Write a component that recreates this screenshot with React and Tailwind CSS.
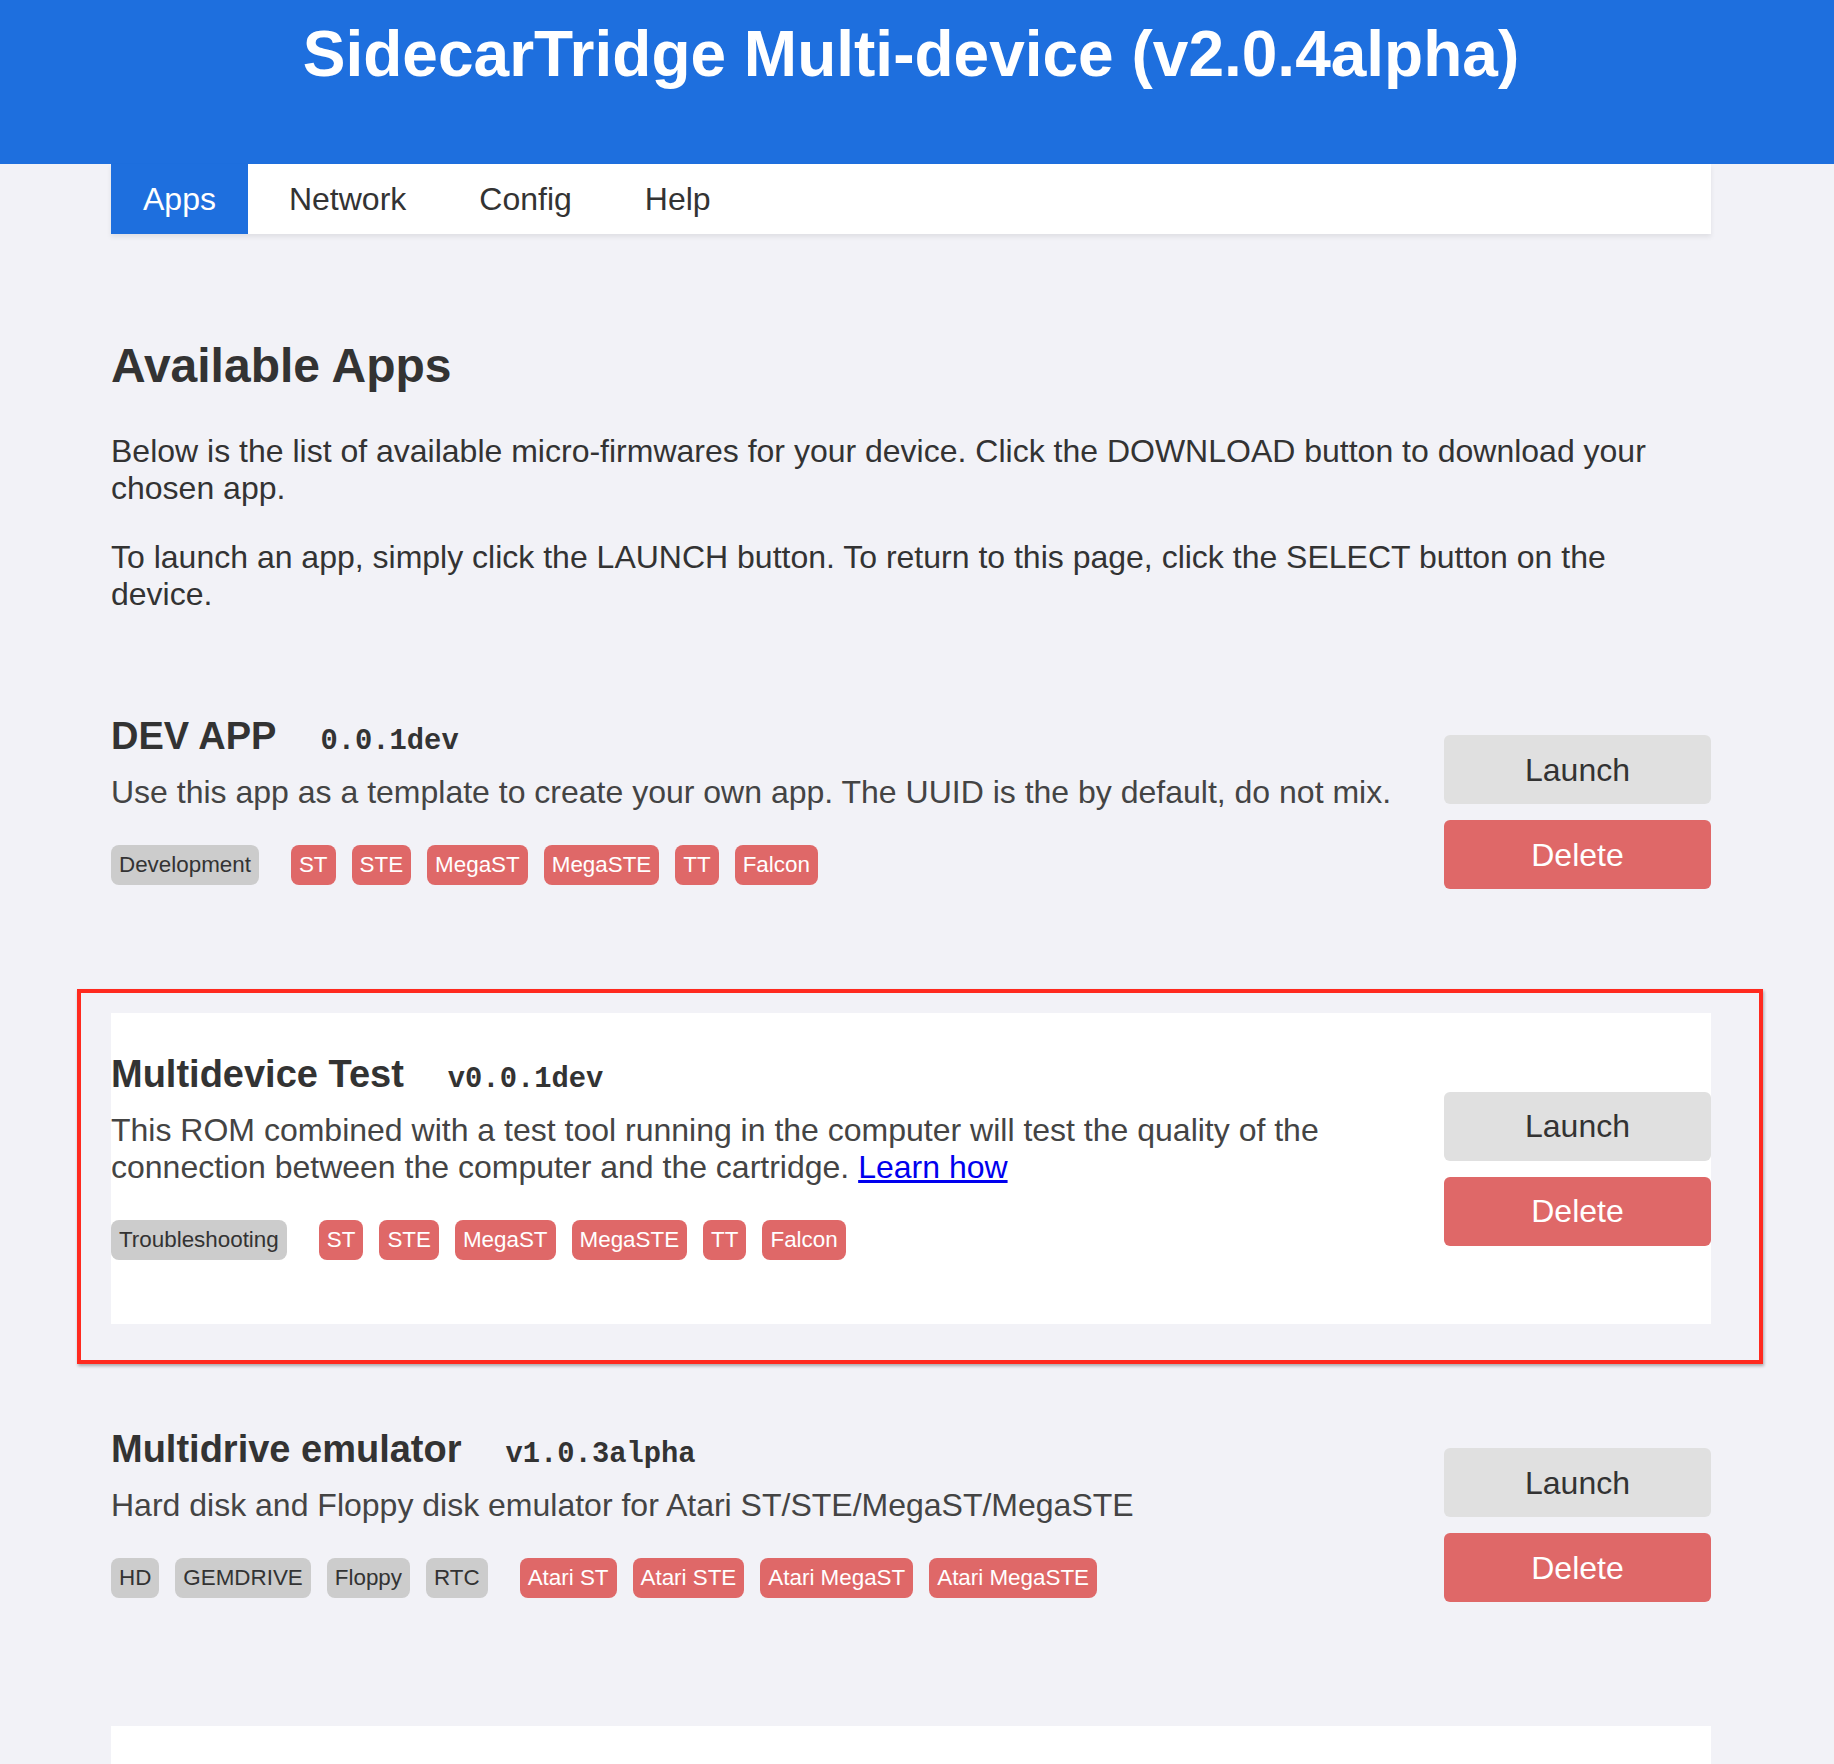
import React from "react";

const apps = [
  {
    name: "DEV APP",
    version: "0.0.1dev",
    desc: (
      <>Use this app as a template to create your own app. The UUID is the by default, do not mix.</>
    ),
    cats: ["Development"],
    devices: ["ST", "STE", "MegaST", "MegaSTE", "TT", "Falcon"],
    card: false,
    first: true,
  },
  {
    name: "Multidevice Test",
    version: "v0.0.1dev",
    desc: (
      <>
        This ROM combined with a test tool running in the computer will test the quality of the connection between the computer and the cartridge.{" "}
        <a href="#" className="text-[#0000ee] underline">Learn how</a>
      </>
    ),
    cats: ["Troubleshooting"],
    devices: ["ST", "STE", "MegaST", "MegaSTE", "TT", "Falcon"],
    card: true,
  },
  {
    name: "Multidrive emulator",
    version: "v1.0.3alpha",
    desc: <>Hard disk and Floppy disk emulator for Atari ST/STE/MegaST/MegaSTE</>,
    cats: ["HD", "GEMDRIVE", "Floppy", "RTC"],
    devices: ["Atari ST", "Atari STE", "Atari MegaST", "Atari MegaSTE"],
    card: false,
  },
];

function Tag({ children, red }) {
  return (
    <span
      className={
        red
          ? "inline-block px-[8px] py-[7px] rounded-[8px] text-[22.4px] leading-[26px] bg-[#df6868] text-white"
          : "inline-block px-[8px] py-[7px] rounded-[8px] text-[22.4px] leading-[26px] bg-[#cccccc] text-[#333]"
      }
    >
      {children}
    </span>
  );
}

function AppRow({ app }) {
  const base = app.first ? "mt-[62px] " : "mt-[64px] ";
  return (
    <div
      className={
        base +
        (app.card
          ? "bg-white py-[40px] flex items-center justify-between gap-[32px]"
          : "py-[40px] flex items-center justify-between gap-[32px]")
      }
    >
      <div className="flex-1 min-w-0">
        <h3 className="text-[38px] leading-[43px] font-bold text-[#333]">
          {app.name}
          <span className="ml-[44px] font-['Liberation_Mono','Courier_New',monospace] text-[28.8px] leading-none font-bold text-[#333]">
            {app.version}
          </span>
        </h3>
        <p className="mt-[16px] text-[32px] leading-[37px] text-[#444]">{app.desc}</p>
        <div className="mt-[34px] mb-[24px] flex items-center">
          <div className="flex gap-[16px]">
            {app.cats.map((c) => (
              <Tag key={c}>{c}</Tag>
            ))}
          </div>
          <div className="ml-[32px] flex gap-[16px]">
            {app.devices.map((d) => (
              <Tag key={d} red>
                {d}
              </Tag>
            ))}
          </div>
        </div>
      </div>
      <div className="flex flex-col gap-[16px] w-[267px] shrink-0">
        <button className="h-[69px] rounded-[6px] bg-[#e0e0e0] text-[#333] text-[32px]">Launch</button>
        <button className="h-[69px] rounded-[6px] bg-[#df6868] text-white text-[32px]">Delete</button>
      </div>
    </div>
  );
}

export default function App() {
  return (
    <div className="relative h-[1764px] overflow-hidden bg-[#f2f2f7] text-[#333] font-['Liberation_Sans',Arial,Helvetica,sans-serif]">
      <header className="bg-[#1e6fde] h-[164px] pt-[22px]">
        <h1 className="ml-[111px] w-[1600px] text-center text-white font-bold text-[64px] leading-[64px]">
          SidecarTridge Multi-device (v2.0.4alpha)
        </h1>
      </header>
      <div className="ml-[111px] w-[1600px]">
        <nav className="bg-white h-[70px] flex gap-[9px] shadow-[0_3px_5px_rgba(0,0,0,0.08)] text-[32px] leading-[37px]">
          <a href="#" className="h-full flex items-center px-[32px] bg-[#1e6fde] text-white">Apps</a>
          <a href="#" className="h-full flex items-center px-[32px] text-[#333]">Network</a>
          <a href="#" className="h-full flex items-center px-[32px] text-[#333]">Config</a>
          <a href="#" className="h-full flex items-center px-[32px] text-[#333]">Help</a>
        </nav>
        <main className="pt-[104px]">
          <h2 className="text-[48px] leading-[55px] font-bold text-[#333]">Available Apps</h2>
          <p className="mt-[40px] text-[32px] leading-[37px]">
            Below is the list of available micro-firmwares for your device. Click the DOWNLOAD button to download your chosen app.
          </p>
          <p className="mt-[32px] text-[32px] leading-[37px]">
            To launch an app, simply click the LAUNCH button. To return to this page, click the SELECT button on the device.
          </p>
          {apps.map((a) => (
            <AppRow key={a.name} app={a} />
          ))}
          <div className="mt-[64px] bg-white h-[310px]"></div>
        </main>
      </div>
      <div className="absolute left-[77px] top-[989px] w-[1686px] h-[375px] border-[4px] border-[#ff2a1f] shadow-[1px_2px_3px_rgba(0,0,0,0.3)] pointer-events-none"></div>
    </div>
  );
}
